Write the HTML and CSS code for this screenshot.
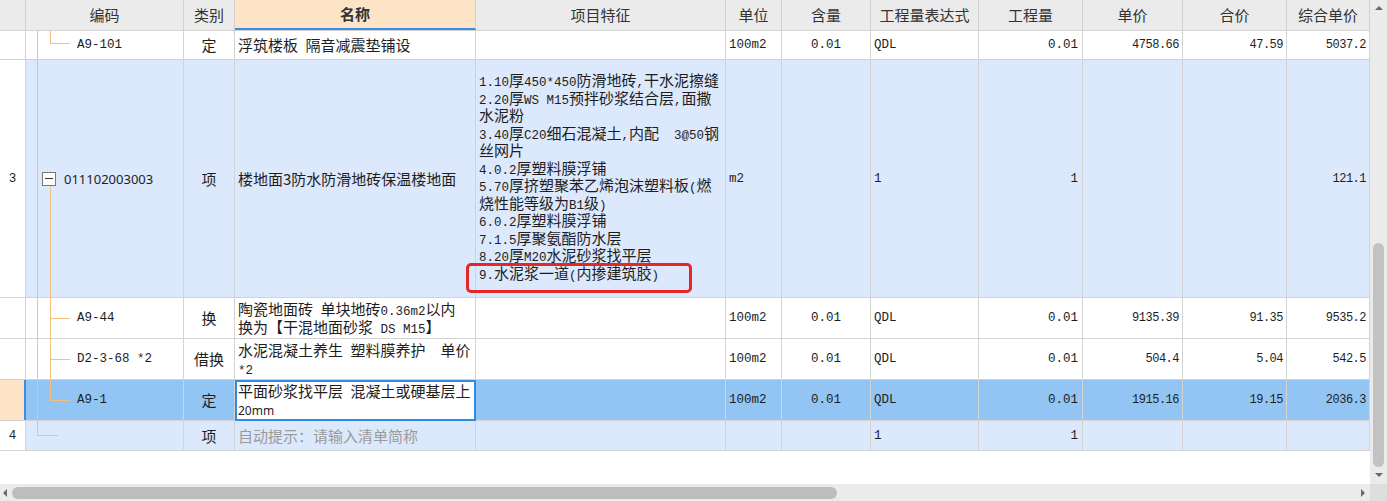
FILE: index.html
```html
<!DOCTYPE html>
<html lang="zh-CN">
<head>
<meta charset="utf-8">
<title>清单</title>
<link rel="stylesheet" href="styles.css">
</head>
<body>
<div class="app">
  <div class="main">
    <div class="grid">
      <div class="row head">
        <div class="rn"></div>
        <div>编码</div>
        <div>类别</div>
        <div class="on">名称</div>
        <div>项目特征</div>
        <div>单位</div>
        <div>含量</div>
        <div>工程量表达式</div>
        <div>工程量</div>
        <div>单价</div>
        <div>合价</div>
        <div>综合单价</div>
      </div>

      <div class="row r1">
        <div class="rn"></div>
        <div class="code c-child"><i class="tl v1"></i><i class="tl v2"></i><i class="tl h2"></i><span class="m">A9-101</span></div>
        <div class="cen">定</div>
        <div>浮筑楼板&ensp;隔音减震垫铺设</div>
        <div></div>
        <div class="m">100m2</div>
        <div class="m cen">0.01</div>
        <div class="m">QDL</div>
        <div class="m n">0.01</div>
        <div class="m n p">4758.66</div>
        <div class="m n p">47.59</div>
        <div class="m n p">5037.2</div>
      </div>

      <div class="row r2 blue">
        <div class="rn m cen">3</div>
        <div class="code c-item"><i class="tl v1"></i><i class="tog"></i><i class="tl v2"></i><span class="num">011102003003</span></div>
        <div class="cen">项</div>
        <div>楼地面3防水防滑地砖保温楼地面</div>
        <div class="feat">
          <p class="lines"><span class="m">1.10</span>厚<span class="m">450*450</span>防滑地砖<span class="m">,</span>干水泥擦缝<br><span class="m">2.20</span>厚<span class="m">WS M15</span>预拌砂浆结合层<span class="m">,</span>面撒<br>水泥粉<br><span class="m">3.40</span>厚<span class="m">C20</span>细石混凝土<span class="m">,</span>内配<span class="m">&nbsp;&nbsp;3@50</span>钢<br>丝网片<br><span class="m">4.0.2</span>厚塑料膜浮铺<br><span class="m">5.70</span>厚挤塑聚苯乙烯泡沫塑料板<span class="m">(</span>燃<br>烧性能等级为<span class="m">B1</span>级<span class="m">)</span><br><span class="m">6.0.2</span>厚塑料膜浮铺<br><span class="m">7.1.5</span>厚聚氨酯防水层<br><span class="m">8.20</span>厚<span class="m">M20</span>水泥砂浆找平层<br><span class="m">9.</span>水泥浆一道<span class="m">(</span>内掺建筑胶<span class="m">)</span></p>
          <i class="mark"></i>
        </div>
        <div class="m">m2</div>
        <div></div>
        <div class="m">1</div>
        <div class="m n">1</div>
        <div></div>
        <div></div>
        <div class="m n p">121.1</div>
      </div>

      <div class="row r3">
        <div class="rn"></div>
        <div class="code c-child"><i class="tl v1"></i><i class="tl v2"></i><i class="tl h2"></i><span class="m">A9-44</span></div>
        <div class="cen">换</div>
        <div><span>陶瓷地面砖&ensp;单块地砖<span class="m">0.36m2</span>以内<br>换为【干混地面砂浆<span class="m"> DS M15</span>】</span></div>
        <div></div>
        <div class="m">100m2</div>
        <div class="m cen">0.01</div>
        <div class="m">QDL</div>
        <div class="m n">0.01</div>
        <div class="m n p">9135.39</div>
        <div class="m n p">91.35</div>
        <div class="m n p">9535.2</div>
      </div>

      <div class="row r4">
        <div class="rn"></div>
        <div class="code c-child"><i class="tl v1"></i><i class="tl v2"></i><i class="tl h2"></i><span class="m">D2-3-68 *2</span></div>
        <div class="cen">借换</div>
        <div><span>水泥混凝土养生&ensp;塑料膜养护&ensp;&ensp;单价<br><span class="m">*2</span></span></div>
        <div></div>
        <div class="m">100m2</div>
        <div class="m cen">0.01</div>
        <div class="m">QDL</div>
        <div class="m n">0.01</div>
        <div class="m n p">504.4</div>
        <div class="m n p">5.04</div>
        <div class="m n p">542.5</div>
      </div>

      <div class="row r5 sel">
        <div class="rn"></div>
        <div class="code c-child"><i class="tl v1"></i><i class="tl v2"></i><i class="tl h2"></i><span class="m">A9-1</span></div>
        <div class="cen">定</div>
        <div class="edit"><span>平面砂浆找平层&ensp;混凝土或硬基层上<br><span class="small">20mm</span></span></div>
        <div></div>
        <div class="m">100m2</div>
        <div class="m cen">0.01</div>
        <div class="m">QDL</div>
        <div class="m n">0.01</div>
        <div class="m n p">1915.16</div>
        <div class="m n p">19.15</div>
        <div class="m n p">2036.3</div>
      </div>

      <div class="row r6 blue">
        <div class="rn m cen">4</div>
        <div class="code"><i class="tl v1"></i><i class="tl h1"></i></div>
        <div class="cen">项</div>
        <div class="hint">自动提示：请输入清单简称</div>
        <div></div>
        <div></div>
        <div></div>
        <div class="m">1</div>
        <div class="m n">1</div>
        <div></div>
        <div></div>
        <div></div>
      </div>
    </div>

    <div class="vbar">
      <i class="arr-up"></i>
      <div class="vtrack"><div class="vthumb"></div></div>
      <i class="arr-dn"></i>
    </div>
  </div>

  <div class="hbar">
    <div class="htrack">
      <i class="arr-lt"></i>
      <div class="hthumb"></div>
      <i class="arr-rt"></i>
    </div>
    <div class="corner"></div>
  </div>
</div>
</body>
</html>
```

FILE: styles.css
```css
* { box-sizing: border-box; }

html, body { margin: 0; padding: 0; }

body {
  width: 1387px;
  height: 501px;
  overflow: hidden;
  background: #fff;
  font-family: "Noto Sans CJK SC", "Noto Sans", sans-serif;
  font-size: 15px;
  color: #1e1e1e;
}

.app {
  display: flex;
  flex-direction: column;
  width: 1387px;
  height: 501px;
}

.main {
  flex: 1;
  display: flex;
  min-height: 0;
}

.grid {
  width: 1370px;
  flex: none;
  overflow: hidden;
  background: #fff;
}

.row {
  display: grid;
  grid-template-columns: 26px 158px 51px 241px 250px 56px 89px 108px 104px 100px 104px 83px;
  border-bottom: 1px solid #d3d3d3;
}

.row > div {
  border-right: 1px solid #d3d3d3;
  display: flex;
  align-items: center;
  padding: 0 3px;
  white-space: nowrap;
  overflow: hidden;
  line-height: 18px;
}

.head { height: 31px; background: #ebebeb; color: #333; }
.head > div { justify-content: center; border-right-color: #d0d0d0; }
.head .on {
  background: #fde4c6;
  font-weight: bold;
  border-bottom: 2px solid #3b8de2;
}

.r1 { height: 29px; }
.r2 { height: 238px; }
.r3, .r4, .r5 { height: 41px; }
.r6 { height: 30px; }

.blue { background: #dce8fb; }
.row > .rn { background: #fff; padding: 0; }
.head > .rn { background: #ebebeb; }
.sel { background: #92c5f3; }
.sel > .rn { background: #fde4c6; border-right: 2px solid #3b8de2; }

.cen { justify-content: center; }
.row > .n { justify-content: flex-end; padding-right: 4px; }

.m {
  font-family: "Liberation Mono", "DejaVu Sans Mono", monospace;
  font-size: 12.5px;
  line-height: 1;
}
.row > .m { line-height: 18px; }
.row > .p { font-size: 12px; letter-spacing: -0.5px; padding-right: 3px; }

.num {
  font-family: "Noto Sans", "Liberation Sans", sans-serif;
  font-size: 13px;
}

.small {
  font-family: "Noto Sans", "Liberation Sans", sans-serif;
  font-size: 12px;
}

.hint { color: #9a9a9a; }

/* tree column */
.row > .code { position: relative; overflow: visible; }
.c-child { padding-left: 51px !important; }
.c-item { padding-left: 38px !important; }

.tl { position: absolute; display: block; background: #f3c17d; }
.v1 { left: 11px; top: 0; bottom: -1px; width: 1px; }
.v2 { left: 24px; top: 0; bottom: -1px; width: 1px; }
.h2 { left: 24px; width: 20px; height: 1px; top: 20px; }
.h1 { left: 11px; width: 21px; height: 1px; top: 14px; }

.r1 .v2 { bottom: auto; height: 12px; }
.r1 .h2 { top: 12px; }
.r2 .v2 { top: 126px; }
.r5 .v2 { bottom: auto; height: 20px; }
.r6 .v1 { bottom: auto; height: 14px; }

.tog {
  position: absolute;
  left: 16px;
  top: 112px;
  width: 14px;
  height: 14px;
  border: 1px solid #7a7a7a;
  background: #fff;
}
.tog::after {
  content: "";
  position: absolute;
  left: 2px;
  right: 2px;
  top: 5px;
  height: 1px;
  background: #333;
}

/* features */
.row > .feat {
  position: relative;
  overflow: visible;
  padding-bottom: 5px;
}
.lines {
  margin: 0;
  line-height: 17.5px;
  white-space: nowrap;
}
.lines .m { line-height: 10px; }

.mark {
  position: absolute;
  left: -10px;
  top: 203px;
  width: 226px;
  height: 30px;
  border: 3px solid #e6262b;
  border-radius: 5px;
}

/* editing cell */
.row > .edit {
  background: #fff;
  border: 2px solid #2f8ae5;
  margin-bottom: -1px;
  padding-left: 1px;
}

/* scrollbars */
.vbar {
  width: 17px;
  flex: none;
  background: #ebebeb;
  display: flex;
  flex-direction: column;
  align-items: center;
}
.arr-up {
  display: block;
  width: 0;
  height: 0;
  border-left: 4px solid transparent;
  border-right: 4px solid transparent;
  border-bottom: 4px solid #6a6a6a;
  margin-top: 6px;
}
.vtrack {
  flex: 1;
  display: flex;
  flex-direction: column;
  justify-content: flex-end;
}
.vthumb {
  width: 11px;
  height: 224px;
  background: #c2c2c2;
  border-radius: 6px;
}
.arr-dn {
  display: block;
  width: 0;
  height: 0;
  border-left: 4px solid transparent;
  border-right: 4px solid transparent;
  border-top: 4px solid #6a6a6a;
  margin: 6px 0 7px;
}

.hbar {
  height: 17px;
  flex: none;
  display: flex;
  background: #ebebeb;
}
.htrack {
  flex: 1;
  display: flex;
  align-items: center;
}
.arr-lt {
  display: block;
  width: 0;
  height: 0;
  border-top: 4px solid transparent;
  border-bottom: 4px solid transparent;
  border-right: 4px solid #6a6a6a;
  margin-left: 3px;
}
.hthumb {
  width: 825px;
  height: 12px;
  margin-left: 5px;
  background: #bdbdbd;
  border-radius: 6px;
}
.arr-rt {
  display: block;
  width: 0;
  height: 0;
  border-top: 4px solid transparent;
  border-bottom: 4px solid transparent;
  border-left: 4px solid #6a6a6a;
  margin-left: auto;
  margin-right: 5px;
}
.corner {
  width: 17px;
  background: #dedede;
}
```
